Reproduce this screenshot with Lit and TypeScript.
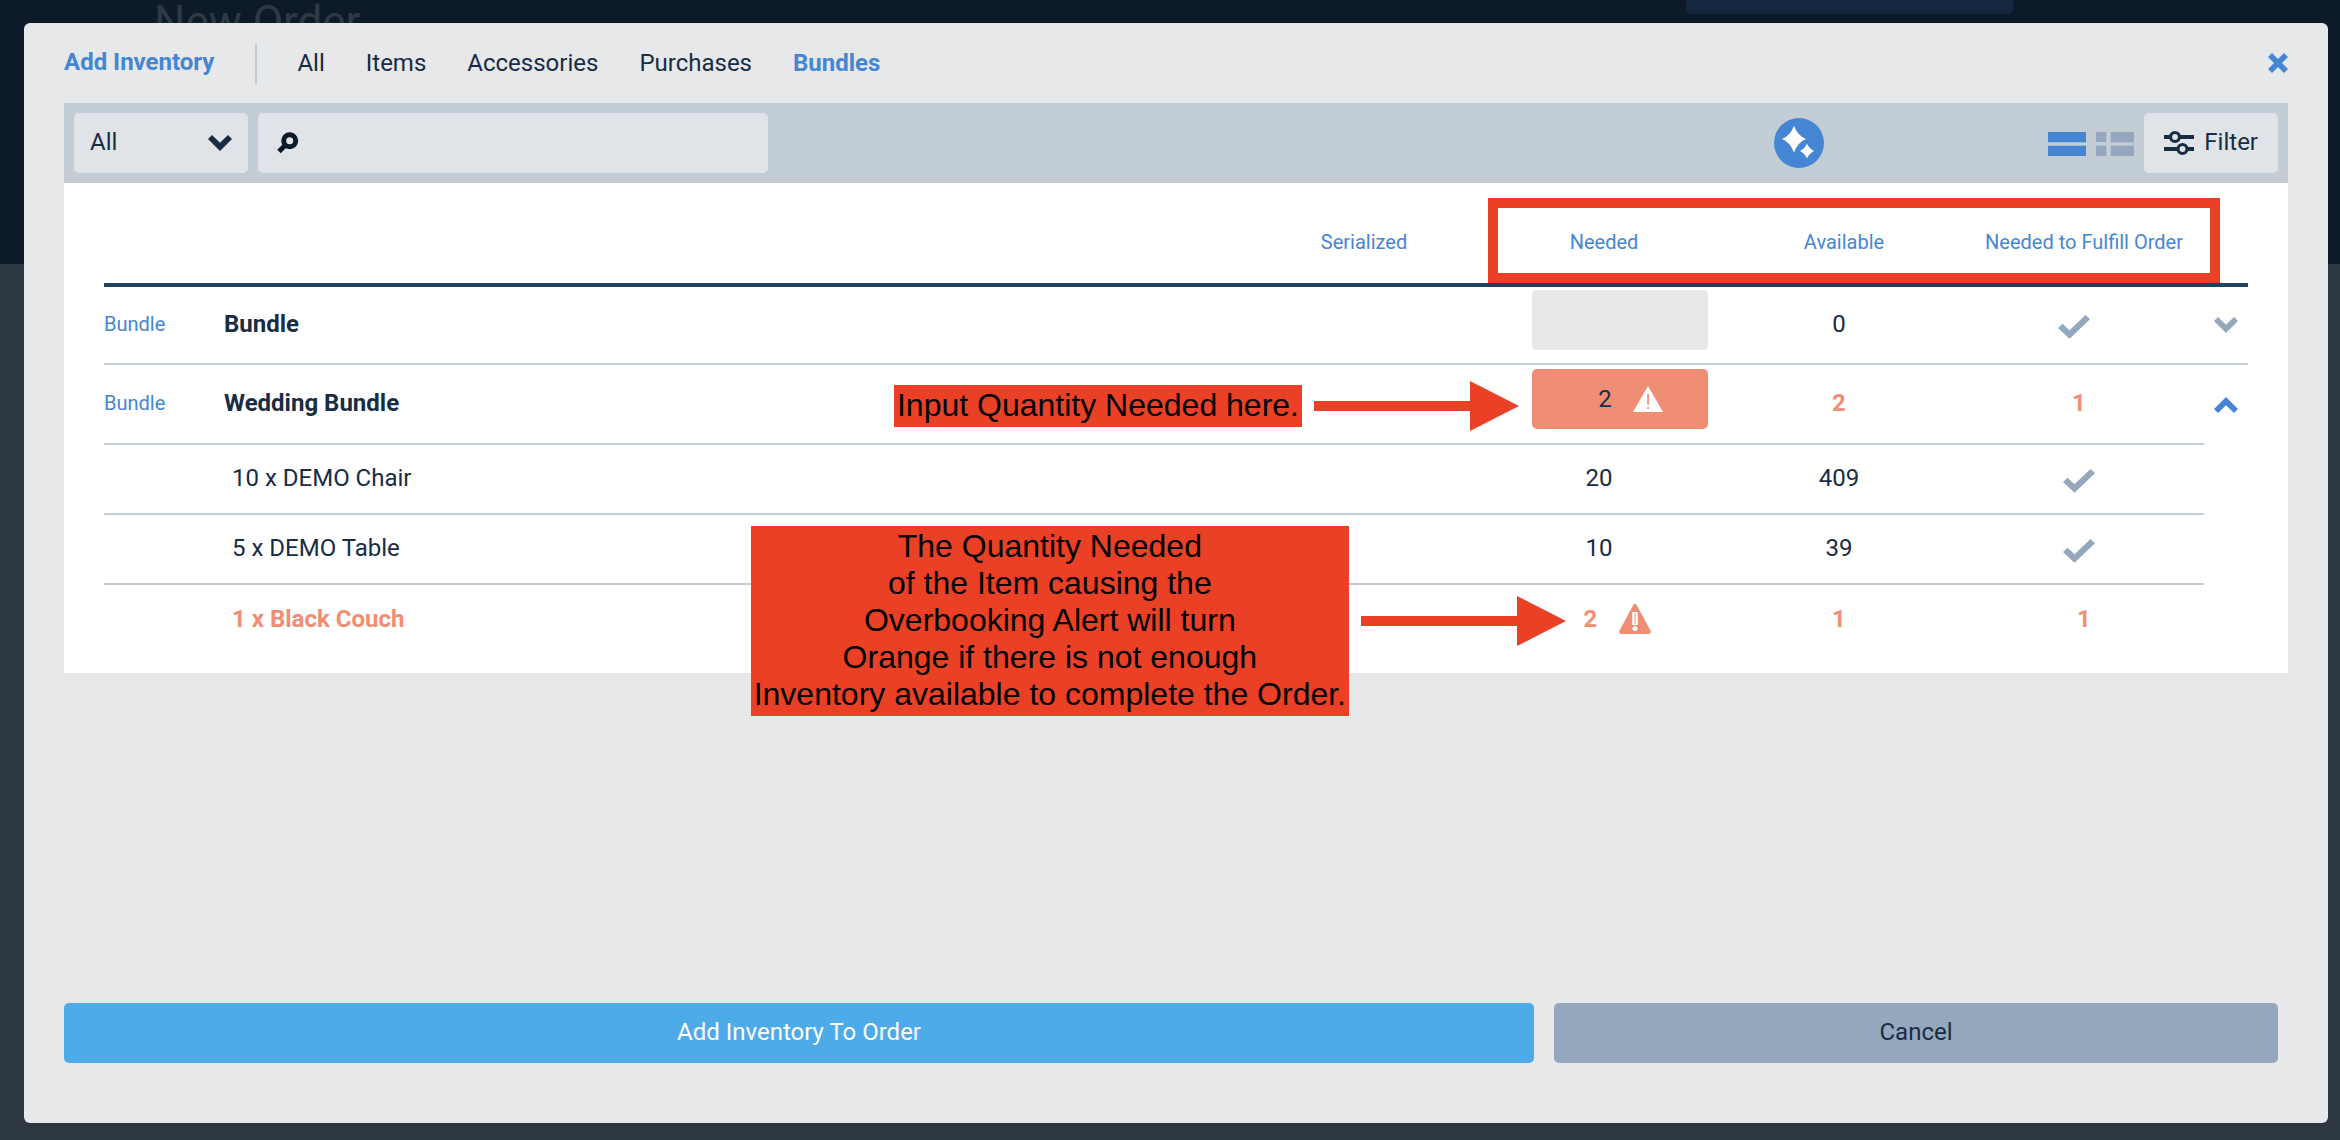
import { LitElement, html, css, svg, nothing } from "lit";
import { customElement, property, state } from "lit/decorators.js";
import { classMap } from "lit/directives/class-map.js";

interface Part {
  name: string;
  needed: number;
  available: number;
  missing: number;
}

interface Bundle {
  name: string;
  needed: string;
  available: number;
  missing: number;
  parts: Part[];
}

const BUNDLES: Bundle[] = [
  { name: "Bundle", needed: "", available: 0, missing: 0, parts: [] },
  {
    name: "Wedding Bundle",
    needed: "2",
    available: 2,
    missing: 1,
    parts: [
      { name: "10 x DEMO Chair", needed: 20, available: 409, missing: 0 },
      { name: "5 x DEMO Table", needed: 10, available: 39, missing: 0 },
      { name: "1 x Black Couch", needed: 2, available: 1, missing: 1 },
    ],
  },
];

const TABS = ["All", "Items", "Accessories", "Purchases", "Bundles"];

const icon = (w: number, h: number, body: unknown) => html`
  <svg width=${w} height=${h} viewBox="0 0 ${w} ${h}" fill="currentColor" aria-hidden="true">${body}</svg>
`;

const chevronDown = () => icon(24, 16, svg`<path d="M0 4 4 0l8 7.7L20 0l4 4-12 12z"/>`);
const chevronUp = () => icon(24, 16, svg`<path d="M0 12l4 4 8-7.7 8 7.7 4-4L12 0z"/>`);
const check = () => icon(32, 24, svg`<path d="M0 13l4.500-4.300 7 6.500L27.500 0 32 4.200 11.500 23.700z"/>`);
const cross = () => icon(20, 20, svg`<path d="M0 4 4 0l6 6 6-6 4 4-6 6 6 6-4 4-6-6-6 6-4-4 6-6z"/>`);
const search = () =>
  icon(
    22,
    22,
    svg`<path d="M2 19.500 8.500 13" stroke="currentColor" stroke-width="5"/><circle cx="12.700" cy="8.700" r="6" fill="none" stroke="currentColor" stroke-width="5"/>`,
  );
const sliders = () =>
  icon(
    30,
    26,
    svg`<path d="M0 5h30v4H0zM0 17h30v4H0z"/>
      <circle cx="11" cy="7" r="4.500" fill="#e0e4e8" stroke="currentColor" stroke-width="3.200"/>
      <circle cx="18.500" cy="19" r="4.500" fill="#e0e4e8" stroke="currentColor" stroke-width="3.200"/>`,
  );
const rowsView = () =>
  icon(
    38,
    24,
    svg`<path d="M0 0h38v10H0zM0 14h38v10H0z"/><path d="M0 10h38v1H0zM0 13h38v1H0z" opacity=".3"/>`,
  );
const splitView = () =>
  icon(
    38,
    24,
    svg`<path d="M0 0h10v10H0zM0 14h10v10H0zM15 0h23v10H15zM15 14h23v10H15z"/>
      <path d="M0 10h11V0h-1v10zM0 13h11v11h-1V14H0zM38 10v1H14V0h1v10zM38 13v1H15v10h-1V13z" opacity=".3"/>`,
  );
const sparkles = () =>
  icon(
    50,
    50,
    svg`<path d="M20 8q4 10 12 13q-8 3-12 13.500q-4-10.500-12-13.500q8-3 12-13z"/>
      <path d="M33 25.500q2 5 7 7.500q-5 2.500-7 7.500q-2-5-7-7.500q5-2.500 7-7.500z"/>`,
  );
const warnSharp = () =>
  icon(
    30,
    26,
    svg`<path d="M15 0 30 26H0z"/><path d="M14.200 8h1.700v10.500h-1.700zM14.200 21h1.700v2h-1.700z" fill="#ef8d75"/>`,
  );
const warnRound = () =>
  icon(
    32,
    30,
    svg`<path d="M14.300 1q1.700-2 3.400 0L31.700 27q.8 2.500-1.700 3H2q-2.500-.5-1.700-3z"/>
      <path d="M13.200 8h5.600v13h-5.600z" fill="#fff"/><path d="M15 9.500h2v10h-2z" opacity=".5"/>
      <circle cx="16" cy="24.500" r="2.500" fill="#fff"/>`,
  );

@customElement("overlay-note")
class OverlayNote extends LitElement {
  @property({ attribute: false }) lines: string[] = [];

  static styles = css`
    :host {
      display: flex;
      align-items: center;
      gap: 12px;
      color: #ea4026;
    }
    .label {
      padding: 2px 3px 3px;
      background: #ea4026;
      color: #000;
      font: 32px/37px "Liberation Sans", Arial, sans-serif;
      text-align: center;
      white-space: nowrap;
    }
    .line {
      display: block;
    }
    svg {
      display: block;
      flex: none;
    }
  `;

  render() {
    return html`
      <div class="label">${this.lines.map((line) => html`<span class="line">${line}</span>`)}</div>
      ${icon(205, 50, svg`<path d="M0 20h156V0l49 25-49 25V30H0z"/>`)}
    `;
  }
}

@customElement("bundle-table")
class BundleTable extends LitElement {
  static styles = css`
    :host {
      display: block;
      padding: 18px 40px;
      background: #fff;
    }
    table {
      width: 100%;
      border-collapse: separate;
      border-spacing: 0;
      table-layout: fixed;
    }
    .col-type {
      width: 120px;
    }
    .col-number {
      width: 240px;
    }
    .col-toggle {
      width: 44px;
    }
    th,
    td {
      box-sizing: border-box;
      padding: 0 0 2px;
      border-bottom: 2px solid #c3cdd6;
      text-align: left;
      vertical-align: middle;
    }
    th {
      height: 86px;
      padding: 0;
      border-bottom: 4px solid #25405f;
      color: #4586d4;
      font-size: 20px;
      font-weight: 400;
    }
    .bundle td {
      height: 78px;
    }
    .bundle.expanded td {
      height: 80px;
    }
    .part td {
      height: 70px;
    }
    .part.last td,
    .bundle .toggle.open {
      border-bottom: 0;
    }
    .type {
      color: #4586d4;
      font-size: 20px;
    }
    .name {
      font-weight: 700;
    }
    .part .name {
      padding-left: 8px;
      font-weight: 400;
    }
    .number {
      text-align: center;
    }
    td.number {
      padding-right: 10px;
    }
    .part .missing {
      padding-right: 0;
    }
    .short {
      color: #ef8d75;
      font-weight: 700;
    }
    .part.short .name {
      font-weight: 700;
    }
    .entry {
      padding: 0 0 10px;
    }
    .field {
      position: relative;
      width: 176px;
      height: 60px;
      margin-left: 48px;
    }
    .field input {
      box-sizing: border-box;
      width: 100%;
      height: 100%;
      padding: 0 30px 0 0;
      border: 0;
      border-radius: 5px;
      background: #e6e8ea;
      color: #182c44;
      font: inherit;
      text-align: center;
    }
    .field.alert input {
      background: #ef8d75;
    }
    .field svg {
      position: absolute;
      top: 17px;
      right: 45px;
      color: #fff;
    }
    .with-icon {
      display: flex;
      align-items: center;
      justify-content: center;
      gap: 22px;
      padding-left: 37px;
    }
    .ok {
      display: flex;
      justify-content: center;
      padding: 5px 10px 0 0;
      color: #95a7bc;
    }
    svg {
      display: block;
    }
    .toggle {
      padding: 0;
    }
    .toggle.open {
      vertical-align: top;
    }
    button {
      display: block;
      padding: 10px;
      border: 0;
      background: none;
      color: #95a7bc;
      cursor: pointer;
    }
    .open button {
      margin-top: 22px;
      color: #4586d4;
    }
  `;

  private missing(count: number) {
    return html`<td class=${classMap({ number: true, missing: true, short: count > 0 })}>
      ${count ? count : html`<span class="ok" role="img" aria-label="Fulfilled">${check()}</span>`}
    </td>`;
  }

  private bundleRow(b: Bundle) {
    const open = b.parts.length > 0;
    const short = b.missing > 0;
    return html`
      <tr class=${classMap({ bundle: true, expanded: open })}>
        <td class="type">Bundle</td>
        <td class="name">${b.name}</td>
        <td></td>
        <td class="entry">
          <div class=${classMap({ field: true, alert: short })}>
            <input type="text" inputmode="numeric" aria-label="Needed, ${b.name}" .value=${b.needed} />
            ${short ? warnSharp() : nothing}
          </div>
        </td>
        <td class=${classMap({ number: true, short })}>${b.available}</td>
        ${this.missing(b.missing)}
        <td class=${classMap({ toggle: true, open })} rowspan=${b.parts.length + 1}>
          <button type="button" aria-label="Toggle ${b.name}" aria-expanded=${open ? "true" : "false"}>
            ${open ? chevronUp() : chevronDown()}
          </button>
        </td>
      </tr>
      ${b.parts.map((p, i) => this.partRow(p, i === b.parts.length - 1))}
    `;
  }

  private partRow(p: Part, last: boolean) {
    const short = p.missing > 0;
    return html`
      <tr class=${classMap({ part: true, last, short })}>
        <td></td>
        <td class="name">${p.name}</td>
        <td></td>
        <td class="number">
          ${short ? html`<span class="with-icon">${p.needed}${warnRound()}</span>` : p.needed}
        </td>
        <td class="number">${p.available}</td>
        ${this.missing(p.missing)}
      </tr>
    `;
  }

  render() {
    return html`
      <table>
        <colgroup>
          <col class="col-type" />
          <col />
          <col class="col-number" span="4" />
          <col class="col-toggle" />
        </colgroup>
        <thead>
          <tr>
            <th></th>
            <th></th>
            <th class="number">Serialized</th>
            <th class="number">Needed</th>
            <th class="number">Available</th>
            <th class="number">Needed to Fulfill Order</th>
            <th></th>
          </tr>
        </thead>
        <tbody>
          ${BUNDLES.map((b) => this.bundleRow(b))}
        </tbody>
      </table>
    `;
  }
}

@customElement("app-root")
class AppRoot extends LitElement {
  @state() private tab = "Bundles";

  static styles = css`
    :host {
      display: grid;
      min-height: 100vh;
      background: #2c3742;
      color: #182c44;
      font: 24px/28px Roboto, sans-serif;
    }
    .backdrop,
    .modal {
      grid-area: 1 / 1;
      box-sizing: border-box;
    }
    .backdrop {
      display: flex;
      align-items: flex-start;
      justify-content: space-between;
      height: 264px;
      padding: 0 327px 0 154px;
      background: #0d1a29;
    }
    .page-title {
      margin: 0;
      color: #2f3945;
      font-size: 44px;
      line-height: 44px;
      font-weight: 400;
    }
    .page-action {
      width: 327px;
      height: 14px;
      border-radius: 0 0 5px 5px;
      background: #14273e;
    }
    .modal {
      position: relative;
      display: flex;
      flex-direction: column;
      margin: 23px 12px 17px 24px;
      padding: 21px 40px 60px;
      border-radius: 6px;
      background: #e6e8ea;
    }
    .top {
      display: flex;
      align-items: center;
      gap: 41px;
      margin-bottom: 19px;
    }
    .title {
      margin: 0;
      padding-bottom: 4px;
      color: #4586d4;
      font-size: 24px;
      font-weight: 700;
    }
    .tabs {
      display: flex;
      flex: 1;
      align-items: center;
      gap: 41px;
      height: 40px;
      padding-left: 40px;
      border-left: 2px solid #c3cdd6;
    }
    button {
      padding: 0;
      border: 0;
      background: none;
      color: inherit;
      font: inherit;
      cursor: pointer;
    }
    .tab,
    .close {
      padding-bottom: 2px;
    }
    .tab.active {
      color: #4586d4;
      font-weight: 700;
    }
    svg {
      display: block;
    }
    .close {
      color: #4586d4;
    }
    .toolbar {
      display: flex;
      align-items: center;
      gap: 10px;
      padding: 10px;
      background: #c3cdd6;
    }
    .box {
      position: relative;
      box-sizing: border-box;
      height: 60px;
      border-radius: 5px;
      background: #e0e4e8;
    }
    .pick {
      width: 174px;
    }
    .pick select,
    .find input {
      box-sizing: border-box;
      width: 100%;
      height: 100%;
      border: 0;
      appearance: none;
      background: none;
      color: inherit;
      font: inherit;
    }
    .pick select {
      padding: 0 50px 2px 16px;
    }
    .pick svg {
      position: absolute;
      top: 22px;
      right: 16px;
      pointer-events: none;
    }
    .find {
      display: flex;
      align-items: center;
      width: 510px;
      padding-left: 19px;
    }
    .find svg {
      flex: none;
      color: #0d1a29;
    }
    .assist {
      margin: 0 214px 0 auto;
      border-radius: 50%;
      background: #4586d4;
      color: #fff;
    }
    .view {
      padding-top: 2px;
      color: #95a7bc;
    }
    .view.active {
      color: #4586d4;
    }
    .filter {
      display: flex;
      align-items: center;
      gap: 10px;
      padding: 0 20px;
    }
    .filter span {
      padding-bottom: 2px;
    }
    .sheet {
      position: relative;
    }
    .frame {
      position: absolute;
      top: 15px;
      right: 68px;
      box-sizing: border-box;
      width: 732px;
      height: 85px;
      border: 10px solid #ea4026;
    }
    .note {
      position: absolute;
    }
    .note-quantity {
      top: 202px;
      right: 769px;
      height: 42px;
    }
    .note-overbook {
      top: 343px;
      right: 722px;
    }
    .footer {
      display: grid;
      grid-template-columns: 67fr 33fr;
      gap: 20px;
      margin-top: auto;
      padding-right: 10px;
    }
    .action {
      height: 60px;
      padding-bottom: 2px;
      border-radius: 5px;
    }
    .primary {
      background: #4eabe9;
      color: #fff;
    }
    .secondary {
      background: #95a7bc;
    }
  `;

  render() {
    return html`
      <div class="backdrop">
        <h1 class="page-title">New Order</h1>
        <div class="page-action"></div>
      </div>
      <section class="modal" role="dialog" aria-labelledby="dialog-title">
        <header class="top">
          <h2 class="title" id="dialog-title">Add Inventory</h2>
          <nav class="tabs">
            ${TABS.map(
              (t) => html`<button
                type="button"
                class=${classMap({ tab: true, active: t === this.tab })}
                @click=${() => (this.tab = t)}
              >${t}</button>`,
            )}
          </nav>
          <button type="button" class="close" aria-label="Close">${cross()}</button>
        </header>
        <div class="toolbar">
          <div class="box pick">
            <select aria-label="Category"><option>All</option></select>
            ${chevronDown()}
          </div>
          <div class="box find">
            ${search()}
            <input type="search" aria-label="Search inventory" />
          </div>
          <button type="button" class="assist" aria-label="Assistant">${sparkles()}</button>
          <button type="button" class="view active" aria-label="List view">${rowsView()}</button>
          <button type="button" class="view" aria-label="Split view">${splitView()}</button>
          <button type="button" class="box filter">${sliders()}<span>Filter</span></button>
        </div>
        <div class="sheet">
          <bundle-table></bundle-table>
          <div class="frame"></div>
          <overlay-note class="note note-quantity" .lines=${["Input Quantity Needed here."]}></overlay-note>
          <overlay-note
            class="note note-overbook"
            .lines=${[
              "The Quantity Needed",
              "of the Item causing the",
              "Overbooking Alert will turn",
              "Orange if there is not enough",
              "Inventory available to complete the Order.",
            ]}
          ></overlay-note>
        </div>
        <footer class="footer">
          <button type="button" class="action primary">Add Inventory To Order</button>
          <button type="button" class="action secondary">Cancel</button>
        </footer>
      </section>
    `;
  }
}
